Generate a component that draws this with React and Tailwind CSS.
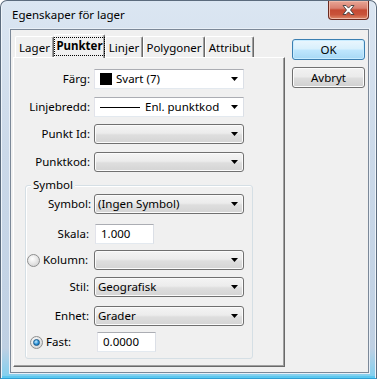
import React from "react";

const Arrow = () => (
  <svg width="7" height="4" viewBox="0 0 7 4" className="shrink-0">
    <path d="M0 0h7L3.5 4z" fill="#000" />
  </svg>
);

// white (editable) or grey (drop-down list) combo box
const Combo = ({ white, children }) => (
  <div
    className={
      white
        ? "h-[20px] w-[150px] flex items-center pl-[4px] pr-[5px] bg-white border border-[#abadb3] border-l-[#e2e3ea] border-r-[#dbdfe6] border-b-[#e3e9ef]"
        : "h-[20px] w-[150px] flex items-center pl-[3px] pr-[5px] rounded-[3px] border border-[#707070] bg-[linear-gradient(180deg,#f4f4f4_0%,#ececec_45%,#dedede_55%,#d4d4d4_100%)] shadow-[inset_0_0_0_1px_#fbfbfb]"
    }>
    <div className="flex-1 flex items-center whitespace-nowrap overflow-hidden">{children}</div>
    <Arrow />
  </div>
);

const TextBox = ({ value }) => (
  <div className="h-[20px] w-[59px] flex items-center pl-[5px] bg-white border border-[#abadb3] border-l-[#e2e3ea] border-r-[#dbdfe6] border-b-[#e3e9ef]">
    {value}
  </div>
);

const Radio = ({ checked }) => (
  <div className="w-[13px] h-[13px] rounded-full border border-[#8e8f8f] bg-[radial-gradient(circle_at_40%_35%,#ffffff,#e6e6e6_50%,#c9c9c9)] flex items-center justify-center shrink-0">
    {checked && (
      <div className="w-[7px] h-[7px] rounded-full bg-[radial-gradient(circle_at_40%_35%,#c6ecff,#2b92d8_55%,#0c4f86)] border border-[#195a8c]" />
    )}
  </div>
);

const Tab = ({ label, w, active }) =>
  active ? (
    <div
      className={`${w} h-[24px] -mb-[1px] relative z-10 flex items-center justify-center bg-[#f0f0f0] border-t border-l border-r border-t-white border-l-white border-r-[#696969] rounded-t-[2px] shadow-[inset_-1px_0_0_#a0a0a0] font-bold`}>
      <span className="border border-dotted border-black px-[1px] leading-[16px] pb-[1px]">{label}</span>
    </div>
  ) : (
    <div
      className={`${w} h-[21px] flex items-center justify-center pt-[2px] bg-[#f0f0f0] border-t border-l border-r border-t-white border-l-white border-r-[#696969] rounded-t-[2px] shadow-[inset_-1px_0_0_#a0a0a0]`}>
      {label}
    </div>
  );

function TabControl() {
  return (
    <div className="ml-[2px] mt-[4px] flex flex-col">
      <div className="h-[23px] flex items-end pl-[2px]">
        <Tab label="Lager" w="w-[39px]" />
        <Tab label="Punkter" w="w-[51px]" active />
        <Tab label="Linjer" w="w-[38px]" />
        <Tab label="Polygoner" w="w-[62px]" />
        <Tab label="Attribut" w="w-[49px]" />
      </div>
      <div className="w-[272px] h-[310px] bg-[#f0f0f0] border border-t-white border-l-white border-r-[#696969] border-b-[#696969] shadow-[inset_-1px_-1px_0_#a0a0a0] pt-[11px] flex flex-col">
        <div className="flex items-center h-[20px]">
          <div className="w-[80px] pr-[4px] text-right">Färg:</div>
          <Combo white>
            <span className="w-[12px] h-[12px] bg-black mr-[4px] ml-[1px] shrink-0" />
            Svart (7)
          </Combo>
        </div>
        <div className="flex items-center h-[20px] mt-[8px]">
          <div className="w-[80px] pr-[4px] text-right">Linjebredd:</div>
          <Combo white>
            <span className="w-[40px] h-[1px] bg-black mr-[5px] ml-[1px] shrink-0" />
            Enl. punktkod
          </Combo>
        </div>
        <div className="flex items-center h-[20px] mt-[7px]">
          <div className="w-[80px] pr-[4px] text-right">Punkt Id:</div>
          <Combo />
        </div>
        <div className="flex items-center h-[20px] mt-[8px]">
          <div className="w-[80px] pr-[4px] text-right">Punktkod:</div>
          <Combo />
        </div>

        <div className="relative ml-[11px] mt-[13px] w-[228px] h-[174px] border border-[#d5dfe5] rounded-[3px] shadow-[inset_1px_1px_0_#ffffff] pt-[8px] flex flex-col">
          <span className="absolute -top-[9px] left-[5px] px-[2px] bg-[#f0f0f0] leading-[16px]">Symbol</span>
          <div className="flex items-center h-[20px]">
            <div className="w-[68px] pr-[3px] text-right">Symbol:</div>
            <Combo>(Ingen Symbol)</Combo>
          </div>
          <div className="flex items-center h-[20px] mt-[10px]">
            <div className="w-[68px] pr-[5px] text-right">Skala:</div>
            <div className="ml-[1px]">
              <TextBox value="1.000" />
            </div>
          </div>
          <div className="flex items-center h-[20px] mt-[6px]">
            <div className="w-[68px] flex items-center pl-[1px]">
              <Radio />
              <span className="ml-[3px]">Kolumn:</span>
            </div>
            <Combo />
          </div>
          <div className="flex items-center h-[20px] mt-[7px]">
            <div className="w-[68px] pr-[5px] text-right">Stil:</div>
            <Combo>Geografisk</Combo>
          </div>
          <div className="flex items-center h-[20px] mt-[9px]">
            <div className="w-[68px] pr-[5px] text-right">Enhet:</div>
            <Combo>Grader</Combo>
          </div>
          <div className="flex items-center h-[20px] mt-[6px]">
            <div className="w-[71px] flex items-center pl-[4px]">
              <Radio checked />
              <span className="ml-[3px]">Fast:</span>
            </div>
            <TextBox value="0.0000" />
          </div>
        </div>
      </div>
    </div>
  );
}

function Buttons() {
  return (
    <div className="ml-[7px] mt-[9px] flex flex-col gap-[7px]">
      <div className="w-[73px] h-[21px] flex items-center justify-center rounded-[3px] border border-[#3c7fb1] bg-[linear-gradient(180deg,#eaf6fd_0%,#d9f0fc_45%,#bee6fd_55%,#a7d9f5_100%)] shadow-[inset_0_0_0_1px_#c8ecff]">
        OK
      </div>
      <div className="w-[73px] h-[21px] flex items-center justify-center rounded-[3px] border border-[#707070] bg-[linear-gradient(180deg,#f2f2f2_0%,#ebebeb_45%,#dddddd_55%,#cfcfcf_100%)] shadow-[inset_0_0_0_1px_#fcfcfc]">
        Avbryt
      </div>
    </div>
  );
}

const CloseBtn = () => (
  <div className="ml-auto mr-[7px] w-[41px] h-[19px] flex items-center justify-center rounded-b-[4px] border border-t-0 border-[#6a2a20] bg-[linear-gradient(180deg,#e8a696_0%,#d98070_40%,#c54a33_50%,#c9533a_75%,#dd8a6a_100%)] shadow-[inset_0_0_0_1px_#f0b8a8]">
    <svg width="13" height="10" viewBox="0 0 13 10">
      <path
        d="M1 0.5h3l2.5 2.6 2.5-2.6h3L8.5 5l3.5 4.5h-3L6.5 6.9 4 9.5H1L4.5 5z"
        fill="#fff"
        stroke="#3e3e3e"
        strokeWidth="0.9"
        strokeLinejoin="round"
      />
    </svg>
  </div>
);

export default function App() {
  return (
    <div className="w-[377px] h-[379px] bg-white font-['Noto_Sans',sans-serif] text-[11.5px] text-black">
      <div className="w-[377px] h-[379px] flex flex-col rounded-t-[7px] border border-[#5b6b7d] border-b-[#2f9fd4] bg-[linear-gradient(180deg,#dbe6f2_0%,#cbd9e9_40%,#bfd0e3_92%,#7fd0f0_100%)] shadow-[inset_1px_0_0_#eef4fa,inset_-1px_0_0_#eef4fa,inset_0_-2px_0_#5cc8ef] overflow-hidden">
        <div className="h-[28px] flex items-start">
          <span className="self-center ml-[11px] text-[11.5px]">Egenskaper för lager</span>
          <CloseBtn />
        </div>
        <div className="ml-[9px] w-[359px] h-[344px] border border-[#7b8898] bg-[#f0f0f0] flex items-start shadow-[0_0_0_1px_#e8eff7]">
          <TabControl />
          <Buttons />
        </div>
      </div>
    </div>
  );
}
